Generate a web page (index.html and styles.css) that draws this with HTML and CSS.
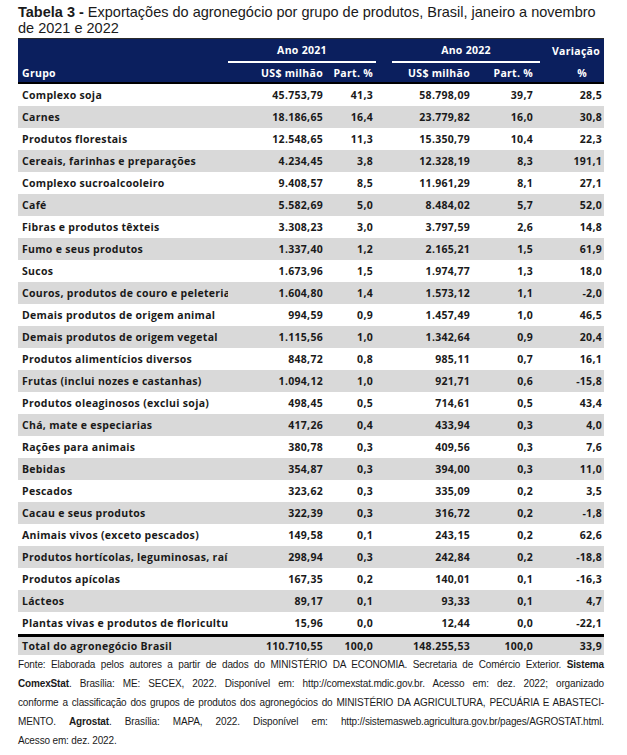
FILE: index.html
```html
<!DOCTYPE html>
<html lang="pt-BR">
<head>
<meta charset="utf-8">
<title>Tabela 3</title>
<link rel="stylesheet" href="styles.css">
</head>
<body>
<div class="page">
  <h1 class="title"><b>Tabela 3 -</b> Exportações do agronegócio por grupo de produtos, Brasil, janeiro a novembro de 2021 e 2022</h1>
  <table class="data">
    <colgroup>
      <col class="c-grupo"><col class="c-us21"><col class="c-p21"><col class="c-gap"><col class="c-us22"><col class="c-p22"><col class="c-var">
    </colgroup>
    <thead>
      <tr class="h1">
        <th></th>
        <th colspan="2" class="ano">Ano 2021</th>
        <th></th>
        <th colspan="2" class="ano">Ano 2022</th>
        <th class="var">Variação</th>
      </tr>
      <tr class="h2">
        <th class="grupo">Grupo</th>
        <th class="n us21">US$ milhão</th>
        <th class="n p21">Part. %</th>
        <th></th>
        <th class="n us22">US$ milhão</th>
        <th class="n p22">Part. %</th>
        <th class="pct">%</th>
      </tr>
    </thead>
    <tbody>
      <tr><td>Complexo soja</td><td>45.753,79</td><td>41,3</td><td></td><td>58.798,09</td><td>39,7</td><td>28,5</td></tr>
      <tr><td>Carnes</td><td>18.186,65</td><td>16,4</td><td></td><td>23.779,82</td><td>16,0</td><td>30,8</td></tr>
      <tr><td>Produtos florestais</td><td>12.548,65</td><td>11,3</td><td></td><td>15.350,79</td><td>10,4</td><td>22,3</td></tr>
      <tr><td>Cereais, farinhas e preparações</td><td>4.234,45</td><td>3,8</td><td></td><td>12.328,19</td><td>8,3</td><td>191,1</td></tr>
      <tr><td>Complexo sucroalcooleiro</td><td>9.408,57</td><td>8,5</td><td></td><td>11.961,29</td><td>8,1</td><td>27,1</td></tr>
      <tr><td>Café</td><td>5.582,69</td><td>5,0</td><td></td><td>8.484,02</td><td>5,7</td><td>52,0</td></tr>
      <tr><td>Fibras e produtos têxteis</td><td>3.308,23</td><td>3,0</td><td></td><td>3.797,59</td><td>2,6</td><td>14,8</td></tr>
      <tr><td>Fumo e seus produtos</td><td>1.337,40</td><td>1,2</td><td></td><td>2.165,21</td><td>1,5</td><td>61,9</td></tr>
      <tr><td>Sucos</td><td>1.673,96</td><td>1,5</td><td></td><td>1.974,77</td><td>1,3</td><td>18,0</td></tr>
      <tr><td>Couros, produtos de couro e peleteria</td><td>1.604,80</td><td>1,4</td><td></td><td>1.573,12</td><td>1,1</td><td>-2,0</td></tr>
      <tr><td>Demais produtos de origem animal</td><td>994,59</td><td>0,9</td><td></td><td>1.457,49</td><td>1,0</td><td>46,5</td></tr>
      <tr><td>Demais produtos de origem vegetal</td><td>1.115,56</td><td>1,0</td><td></td><td>1.342,64</td><td>0,9</td><td>20,4</td></tr>
      <tr><td>Produtos alimentícios diversos</td><td>848,72</td><td>0,8</td><td></td><td>985,11</td><td>0,7</td><td>16,1</td></tr>
      <tr><td>Frutas (inclui nozes e castanhas)</td><td>1.094,12</td><td>1,0</td><td></td><td>921,71</td><td>0,6</td><td>-15,8</td></tr>
      <tr><td>Produtos oleaginosos (exclui soja)</td><td>498,45</td><td>0,5</td><td></td><td>714,61</td><td>0,5</td><td>43,4</td></tr>
      <tr><td>Chá, mate e especiarias</td><td>417,26</td><td>0,4</td><td></td><td>433,94</td><td>0,3</td><td>4,0</td></tr>
      <tr><td>Rações para animais</td><td>380,78</td><td>0,3</td><td></td><td>409,56</td><td>0,3</td><td>7,6</td></tr>
      <tr><td>Bebidas</td><td>354,87</td><td>0,3</td><td></td><td>394,00</td><td>0,3</td><td>11,0</td></tr>
      <tr><td>Pescados</td><td>323,62</td><td>0,3</td><td></td><td>335,09</td><td>0,2</td><td>3,5</td></tr>
      <tr><td>Cacau e seus produtos</td><td>322,39</td><td>0,3</td><td></td><td>316,72</td><td>0,2</td><td>-1,8</td></tr>
      <tr><td>Animais vivos (exceto pescados)</td><td>149,58</td><td>0,1</td><td></td><td>243,15</td><td>0,2</td><td>62,6</td></tr>
      <tr><td>Produtos hortícolas, leguminosas, raízes e tubérculos</td><td>298,94</td><td>0,3</td><td></td><td>242,84</td><td>0,2</td><td>-18,8</td></tr>
      <tr><td>Produtos apícolas</td><td>167,35</td><td>0,2</td><td></td><td>140,01</td><td>0,1</td><td>-16,3</td></tr>
      <tr><td>Lácteos</td><td>89,17</td><td>0,1</td><td></td><td>93,33</td><td>0,1</td><td>4,7</td></tr>
      <tr><td>Plantas vivas e produtos de floricultura</td><td>15,96</td><td>0,0</td><td></td><td>12,44</td><td>0,0</td><td>-22,1</td></tr>
    </tbody>
    <tfoot>
      <tr><td>Total do agronegócio Brasil</td><td>110.710,55</td><td>100,0</td><td></td><td>148.255,53</td><td>100,0</td><td>33,9</td></tr>
    </tfoot>
  </table>
  <div class="source">
    <p class="jl">Fonte: Elaborada pelos autores a partir de dados do MINISTÉRIO DA ECONOMIA. Secretaria de Comércio Exterior. <b>Sistema</b></p>
    <p class="jl"><b>ComexStat</b>. Brasília: ME: SECEX, 2022. Disponível em: http://comexstat.mdic.gov.br. Acesso em: dez. 2022; organizado</p>
    <p class="jl">conforme a classificação dos grupos de produtos dos agronegócios do MINISTÉRIO DA AGRICULTURA, PECUÁRIA E ABASTECI-</p>
    <p class="jl">MENTO. <b>Agrostat</b>. Brasília: MAPA, 2022. Disponível em: http://sistemasweb.agricultura.gov.br/pages/AGROSTAT.html.</p>
    <p>Acesso em: dez. 2022.</p>
  </div>
</div>
</body>
</html>
```
FILE: styles.css
```css
html, body {
  margin: 0;
  padding: 0;
  background: #ffffff;
}

.page {
  width: 586px;
  padding: 4px 0 0 18px;
  color: #1a1a1a;
}

.title {
  margin: 0;
  font-family: "Liberation Sans", Arial, sans-serif;
  font-size: 14.5px;
  font-weight: normal;
  line-height: 16px;
  color: #1a1a1a;
  width: 592px;
}

.title b {
  font-weight: bold;
}

.data {
  margin-top: 2px;
  width: 586px;
  table-layout: fixed;
  border-collapse: separate;
  border-spacing: 0;
  font-family: "Open Sans", sans-serif;
  font-weight: 700;
  font-size: 10.5px;
  letter-spacing: 0.3px;
}

.c-grupo { width: 210px; }
.c-us21 { width: 98px; }
.c-p21 { width: 50px; }
.c-gap { width: 16px; }
.c-us22 { width: 81px; }
.c-p22 { width: 67px; }
.c-var { width: 64px; }

thead th {
  background: #0b1f5e;
  color: #ffffff;
  font-weight: 700;
  padding: 0;
  white-space: nowrap;
}

.h1 th {
  height: 22px;
  border-top: 1px solid #2b2b2b;
  text-align: center;
}

.h1 th.ano {
  border-bottom: 2px solid #ffffff;
}

.h1 th.var {
  text-align: right;
  padding-right: 4px;
}

.h2 th {
  height: 19px;
  border-bottom: 2px solid #000000;
  text-align: right;
}

.h2 th.grupo {
  text-align: left;
  padding-left: 4px;
}

.h2 .us21 { padding-right: 3px; }
.h2 .p21 { padding-right: 3px; }
.h2 .us22 { padding-right: 3px; }
.h2 .p22 { padding-right: 7px; }
.h2 .pct { padding-right: 17px; }

tbody td, tfoot td {
  height: 22px;
  padding: 0;
  text-align: right;
  white-space: nowrap;
  color: #1a1a1a;
}

tbody tr:nth-child(even) td {
  background: #d9d9d9;
}

td:nth-child(1) {
  text-align: left;
  padding-left: 4px;
  overflow: hidden;
  text-overflow: clip;
}

td:nth-child(2), td:nth-child(3), td:nth-child(5) {
  padding-right: 3px;
}

td:nth-child(6) {
  padding-right: 7px;
}

td:nth-child(7) {
  padding-right: 2px;
}

tfoot td {
  height: 18px;
  background: #d9d9d9;
  border-top: 3px solid #000000;
}

.source {
  margin-top: 0;
  font-family: "Liberation Sans", Arial, sans-serif;
  font-size: 10px;
  letter-spacing: -0.15px;
  line-height: 19px;
  color: #1a1a1a;
}

.source p {
  margin: 0;
  white-space: nowrap;
}

.source p.jl {
  text-align: justify;
  text-align-last: justify;
  white-space: normal;
}
```
